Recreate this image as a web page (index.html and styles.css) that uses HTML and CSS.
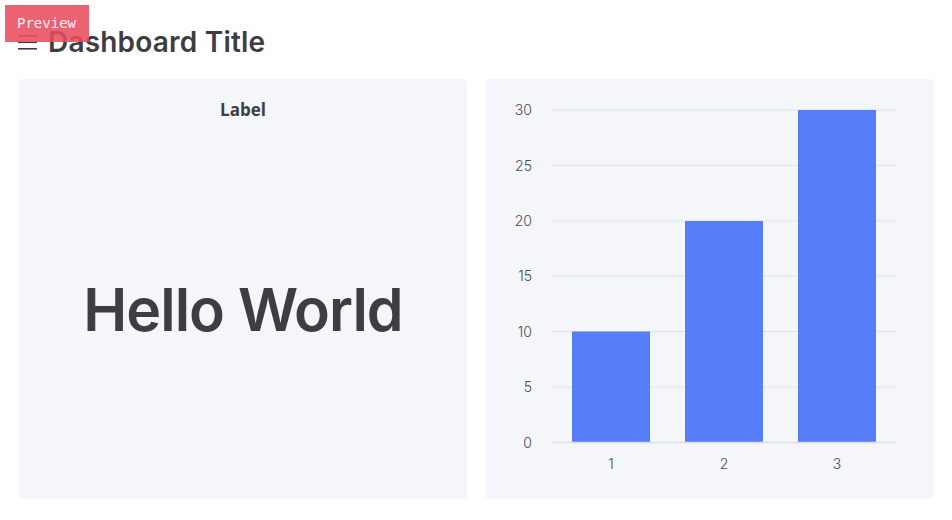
FILE: index.html
```html
<!DOCTYPE html>
<html lang="en">
<head>
<meta charset="utf-8">
<title>Dashboard</title>
<link rel="stylesheet" href="styles.css">
</head>
<body>
<div class="preview">Preview</div>
<header class="header">
  <svg class="menu" width="20" height="16" viewBox="0 0 20 16" aria-hidden="true">
    <rect x="0" y="1" width="19" height="1.6" fill="#3d3d44"/>
    <rect x="0" y="7.5" width="19" height="1.6" fill="#3d3d44"/>
    <rect x="0" y="14" width="19" height="1.6" fill="#3d3d44"/>
  </svg>
  <h1 class="title">Dashboard Title</h1>
</header>
<main class="grid">
  <section class="card card-text">
    <div class="label">Label</div>
    <div class="big">Hello World</div>
  </section>
  <section class="card card-chart">
    <svg class="chart" width="448" height="420" viewBox="0 0 448 420">
      <g class="grid-lines" stroke="#dde3f0" stroke-width="1.2">
        <line x1="66" x2="410" y1="31" y2="31"/>
        <line x1="66" x2="410" y1="86.5" y2="86.5"/>
        <line x1="66" x2="410" y1="142" y2="142"/>
        <line x1="66" x2="410" y1="197" y2="197"/>
        <line x1="66" x2="410" y1="252.5" y2="252.5"/>
        <line x1="66" x2="410" y1="308" y2="308"/>
      </g>
      <g fill="#557ef8">
        <rect x="86" y="252.5" width="78" height="110.5"/>
        <rect x="199" y="142" width="78" height="221"/>
        <rect x="312" y="31" width="78" height="332"/>
      </g>
      <line x1="66" x2="410" y1="363.5" y2="363.5" stroke="#d9e0ef" stroke-width="1.5"/>
      <g class="axis" text-anchor="end">
        <text x="46" y="36">30</text>
        <text x="46" y="91.5">25</text>
        <text x="46" y="147">20</text>
        <text x="46" y="202">15</text>
        <text x="46" y="257.5">10</text>
        <text x="46" y="313">5</text>
        <text x="46" y="368.5">0</text>
      </g>
      <g class="axis" text-anchor="middle">
        <text x="125" y="390">1</text>
        <text x="238" y="390">2</text>
        <text x="351" y="390">3</text>
      </g>
    </svg>
  </section>
</main>
</body>
</html>
```
FILE: styles.css
```css
html, body {
  margin: 0;
  padding: 0;
  background: #ffffff;
}
body {
  width: 952px;
  height: 520px;
  overflow: hidden;
  font-family: "Inter", "Noto Sans", sans-serif;
  color: #3d3d44;
  position: relative;
}
.preview {
  position: absolute;
  top: 5px;
  left: 5px;
  width: 84px;
  height: 37px;
  box-sizing: border-box;
  padding: 10px 0 0 12px;
  background: rgba(232, 76, 94, 0.88);
  color: #fdeef0;
  font-family: "DejaVu Sans Mono", "Liberation Mono", monospace;
  font-size: 14px;
  line-height: 17px;
  z-index: 2;
}
.header {
  display: flex;
  align-items: center;
  gap: 10px;
  padding: 24px 18px 0 18px;
  height: 36px;
}
.menu {
  flex: none;
}
.title {
  margin: 0;
  font-size: 28px;
  font-weight: 600;
  line-height: 36px;
  letter-spacing: 0.2px;
  color: #3d3d44;
}
.grid {
  display: grid;
  grid-template-columns: 448px 448px;
  gap: 19px;
  padding: 19px 18px 0 19px;
}
.card {
  height: 420px;
  background: #f4f6fa;
  border-radius: 3px;
}
.card-text {
  display: flex;
  flex-direction: column;
  align-items: center;
}
.label {
  margin-top: 20px;
  font-family: "Open Sans", "Noto Sans", sans-serif;
  font-weight: 700;
  font-size: 17px;
  line-height: 22px;
  color: #3d3d44;
}
.big {
  flex: 1;
  display: flex;
  align-items: center;
  margin-top: -2px;
  font-size: 59px;
  font-weight: 600;
  letter-spacing: -1px;
  color: #3d3d44;
}
.chart {
  display: block;
}
.axis text {
  font-family: "Inter", "Noto Sans", sans-serif;
  font-size: 14px;
  font-weight: 300;
  fill: #4a4a52;
}
```
